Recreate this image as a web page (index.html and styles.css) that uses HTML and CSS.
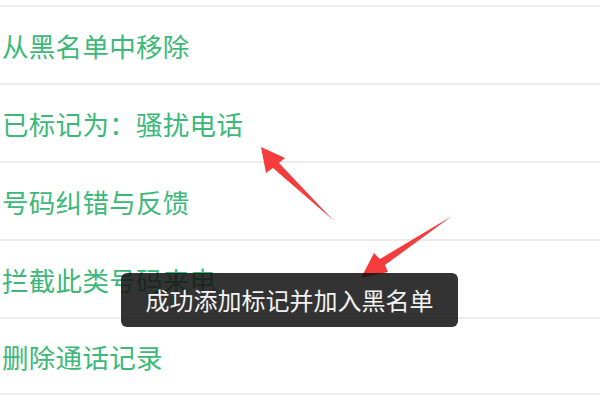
FILE: index.html
```html
<!DOCTYPE html>
<html lang="zh-CN">
<head>
  <meta charset="UTF-8">
  <meta name="viewport" content="width=device-width, initial-scale=1.0">
  <title>号码操作</title>
  <link rel="stylesheet" href="styles.css">
</head>
<body>
  <ul class="menu">
    <li>从黑名单中移除</li>
    <li>已标记为：骚扰电话</li>
    <li>号码纠错与反馈</li>
    <li>拦截此类号码来电</li>
    <li>删除通话记录</li>
  </ul>

  <svg class="arrows" width="600" height="400" viewBox="0 0 600 400">
    <polygon points="261,147 285,158 279,163 333,220 273,168 266,173" fill="#f53c3c"/>
    <polygon points="361,278 374,253 380,259 452,216 385,265 388,272" fill="#f53c3c"/>
  </svg>

  <div class="toast">成功添加标记并加入黑名单</div>
</body>
</html>
```

FILE: styles.css
```css
* { box-sizing: border-box; }
body {
  margin: 0;
  background: #fff;
  font-family: "Noto Sans CJK SC", "Noto Sans", sans-serif;
  width: 600px;
  height: 400px;
  overflow: hidden;
  position: relative;
}
.menu {
  list-style: none;
  margin: 0;
  padding: 0;
  padding-top: 5px;
}
.menu li {
  height: 78px;
  border-top: 2px solid #ececec;
  display: flex;
  align-items: center;
  padding-left: 2px;
  font-size: 26.5px;
  color: #3cb878;
  letter-spacing: 0.3px;
}
.menu li:last-child { border-bottom: 2px solid #ececec; }
.arrows {
  position: absolute;
  left: 0;
  top: 0;
}
.toast {
  position: absolute;
  left: 121px;
  top: 273px;
  width: 337px;
  height: 54px;
  border-radius: 6px;
  background: rgba(17, 17, 17, 0.86);
  color: #f2f2f2;
  font-size: 24px;
  display: flex;
  align-items: center;
  justify-content: center;
  padding-bottom: 2px;
}
```
